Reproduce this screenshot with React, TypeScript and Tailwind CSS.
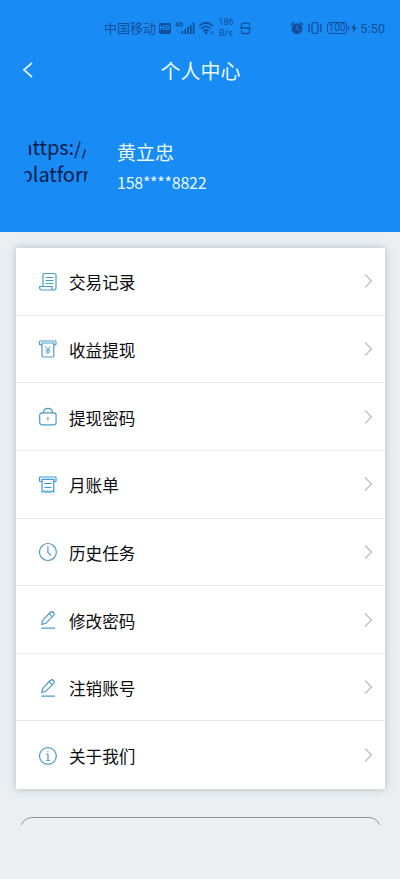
import type { ReactNode } from "react";

function Icon({ children, color = "#4c9cc8" }: { children: ReactNode; color?: string }) {
  return (
    <svg width="20" height="20" viewBox="0 0 20 20" fill="none" stroke={color} strokeWidth="1.2" strokeLinecap="round" strokeLinejoin="round" className="mt-px shrink-0">
      {children}
    </svg>
  );
}

const IconRecord = () => (
  <Icon>
    <path d="M5 14V2.6Q5 1.5 6.1 1.5H16.5Q18 1.5 18 3V16.2Q18 18 16.2 18H3.8Q1.5 18 1.5 14.5H14V16.2Q14 18 16 18" />
    <path d="M8 5.5H15M8 8.5H15M8 11.5H15" />
  </Icon>
);

const IconWithdraw = () => (
  <Icon>
    <path d="M4 5.8H2.2Q1.5 5.8 1.5 5V2.8Q1.5 2 2.3 2H17.2Q18 2 18 2.8V5Q18 5.8 17.3 5.8H15.8" />
    <path d="M4 4V16.8Q4 18 5.2 18H14.5Q15.8 18 15.8 16.8V4Z" />
    <path d="M7.6 7.6L9.9 10.5L12.2 7.6M9.9 10.5V15M7.8 11H12M7.8 13H12" strokeWidth="0.9" />
  </Icon>
);

const IconLock = () => (
  <Icon>
    <rect x="1.7" y="5.8" width="16.4" height="12" rx="2.2" />
    <path d="M5.3 5.6Q5.8 1.3 9.9 1.3Q14 1.3 14.5 5.6M9.9 10.3V12.8" />
  </Icon>
);

const IconBill = () => (
  <Icon color="#379ae0">
    <path d="M4 6.5H2Q1.5 6.5 1.5 6V2.5Q1.5 2 2 2H17.5Q18 2 18 2.5V6Q18 6.5 17.5 6.5H15.8" />
    <path d="M4 4.3H15.8V17L13.5 16L11.7 17.5L9.9 16L8 17.5L6.2 16L4 17ZM6.8 8.5H13M6.8 12.5H13" />
  </Icon>
);

const IconClock = () => (
  <Icon>
    <circle cx="9.9" cy="10" r="8.5" />
    <path d="M9.9 4.5V10.3L12.7 13.2" />
  </Icon>
);

const IconEdit = () => (
  <Icon>
    <path d="M3.7 14.5L4.7 10.3L12.2 2.5Q13.8 1 15.5 2.5Q17 4 15.4 5.7L7.7 13.4ZM11.2 3.7L14.3 6.8M3.9 18.2H16.6" />
  </Icon>
);

const IconInfo = () => (
  <Icon>
    <circle cx="9.9" cy="10" r="8.4" />
    <path d="M8.9 8.2H10V14.5M8.9 14.5H11.1M9.9 5.3V5.6" />
  </Icon>
);

const menus = [
  { label: "交易记录", icon: <IconRecord /> },
  { label: "收益提现", icon: <IconWithdraw /> },
  { label: "提现密码", icon: <IconLock /> },
  { label: "月账单", icon: <IconBill /> },
  { label: "历史任务", icon: <IconClock /> },
  { label: "修改密码", icon: <IconEdit /> },
  { label: "注销账号", icon: <IconEdit /> },
  { label: "关于我们", icon: <IconInfo /> },
];

function StatusBar() {
  return (
    <div className="flex h-[50px] items-center pt-[6px] pl-[104px] pr-[15px] text-[#12509a]">
      <span className="w-[53px] shrink-0 whitespace-nowrap text-[13px] leading-[20px]">中国移动</span>
      <span className="ml-[2px] flex h-[11px] w-[12px] shrink-0 items-center justify-center rounded-[2px] bg-[#12509a] font-[Roboto] text-[8px] font-bold leading-none text-[#188bf5]">HD</span>
      <svg width="21" height="16" viewBox="0 0 21 16" fill="currentColor" className="ml-[3px] shrink-0 overflow-visible">
        <text x="1" y="6.5" fontSize="7" fontWeight="700" fontFamily="Roboto">46</text>
        <path d="M7.5 11h1.8v3h-1.8zM10.3 9h1.8v5h-1.8zM13.1 7h1.8v7h-1.8zM15.9 5h1.8v9h-1.8zM18.7 2.5h1.8v11.5h-1.8z" />
        <path d="M2 10h2v1H2zM4 12h2v1H4z" opacity=".5" />
      </svg>
      <svg width="17" height="16" viewBox="0 0 17 16" fill="none" stroke="currentColor" strokeWidth="1.7" className="ml-[3px] shrink-0">
        <path d="M1 6Q8 -0.5 15 6M3.2 8.7Q8 4.2 12.8 8.7M5.4 11.2Q8 8.8 10.6 11.2" />
        <circle cx="8" cy="13" r="0.6" />
        <path d="M12.8 11.5V14M14.8 14V11.5" strokeWidth="0.8" />
      </svg>
      <div className="ml-[3px] flex w-[16px] shrink-0 flex-col items-center font-[Roboto] text-[9px] leading-[11px]">
        <span>186</span>
        <span>B/s</span>
      </div>
      <svg width="11" height="13" viewBox="0 0 11 13" fill="none" stroke="currentColor" strokeWidth="1.3" className="ml-[6px] shrink-0">
        <path d="M9.5 3.4V2.7Q9.5 1.2 7.8 1.2H3.2Q1.5 1.2 1.5 2.8V4.6Q1.5 6 3.2 6H7.8Q9.5 6 9.5 7.6V9.8Q9.5 11.5 7.8 11.5H3.2Q1.5 11.5 1.5 9.8V8.8M0 6H11" />
      </svg>
      <div className="ml-auto flex items-center">
        <svg width="14" height="14" viewBox="0 0 14 14" fill="none" stroke="currentColor">
          <circle cx="7" cy="7.6" r="5.4" fill="currentColor" stroke="none" />
          <path d="M1 4L4 1.4M13 4L10 1.4" strokeWidth="1.6" />
          <path d="M7 4.5V8L9.3 9.2" stroke="#188bf5" />
        </svg>
        <svg width="16" height="14" viewBox="0 0 16 14" fill="none" stroke="currentColor" strokeWidth="1.3" className="ml-[3px]">
          <rect x="5" y="1.7" width="6" height="10.6" rx="1" />
          <path d="M2.4 3L1.6 5L2.6 7L1.6 9L2.4 11M13.6 3L14.4 5L13.4 7L14.4 9L13.6 11" />
        </svg>
        <div className="ml-[4px] flex h-[12px] w-[20px] items-center justify-center rounded-[3px] border border-[#12509a] font-[Roboto] text-[10px] leading-none">100</div>
        <div className="ml-[1px] h-[4px] w-[1px] bg-[#12509a]" />
        <svg width="6" height="10" viewBox="0 0 6 10" fill="currentColor" className="ml-[2px]">
          <path d="M3.5 0L0.3 5.5H2.5L2 10L5.8 4H3.4Z" />
        </svg>
        <span className="ml-[3px] w-[25px] whitespace-nowrap font-[Roboto] text-[13px] leading-none">5:50</span>
      </div>
    </div>
  );
}

export default function App() {
  return (
    <div className="h-[879px] w-full overflow-hidden bg-[#ebeff2] font-['Noto_Sans_CJK_SC','Noto_Sans',sans-serif]">
      <header className="h-[232px] bg-[#188bf5]">
        <StatusBar />
        <div className="grid h-[42px] grid-cols-[1fr_auto_1fr] items-center text-[#e6faff]">
          <svg width="12" height="16" viewBox="0 0 12 16" fill="none" stroke="currentColor" strokeWidth="1.7" className="ml-[22px] -mt-[2px]">
            <path d="M10 0.8L2 7.8L10 15" />
          </svg>
          <h1 className="pl-px text-[20px] leading-none">个人中心</h1>
        </div>
        <div className="flex pt-[41px] pl-[24px]">
          {/* 头像 */}
          <div className="size-[64px] shrink-0 overflow-hidden rounded-[28px] text-[20px] leading-[27px] text-[#071c4b]">
            <p className="-ml-[3.5px] w-[84px] tracking-[-0.1px]">
              https://
              <br />
              platform
            </p>
          </div>
          <div className="ml-[29px] pt-[7px] text-[#e6faff]">
            <p className="text-[19px] leading-[24px]">黄立忠</p>
            <p className="mt-[6px] text-[16px] leading-[24px] tracking-[-0.25px]">158****8822</p>
          </div>
        </div>
      </header>

      <main className="mt-[16px] mr-[15px] ml-[16px] bg-white shadow-[0_0_8px_rgba(80,95,100,0.35)]">
        {menus.map((menu) => (
          <button key={menu.label} className="flex h-[67.65px] w-full items-center border-b border-[#e9eaeb] pr-[12px] pl-[22px] last:border-b-0">
            {menu.icon}
            <span className="ml-[11px] pt-[2px] text-[16.6px] leading-[24px] text-[#0c0c0c]">{menu.label}</span>
            <svg width="9" height="16" viewBox="0 0 9 16" fill="none" stroke="#c2c4c5" strokeWidth="1.5" className="ml-auto">
              <path d="M1 1.5L7.5 8L1 14.5" />
            </svg>
          </button>
        ))}
      </main>

      <div className="mt-[27.5px] mr-[19px] ml-[20px] h-[8px] overflow-hidden">
        <div className="h-[45px] rounded-[12px] border border-[#8f9599]" />
      </div>
    </div>
  );
}
